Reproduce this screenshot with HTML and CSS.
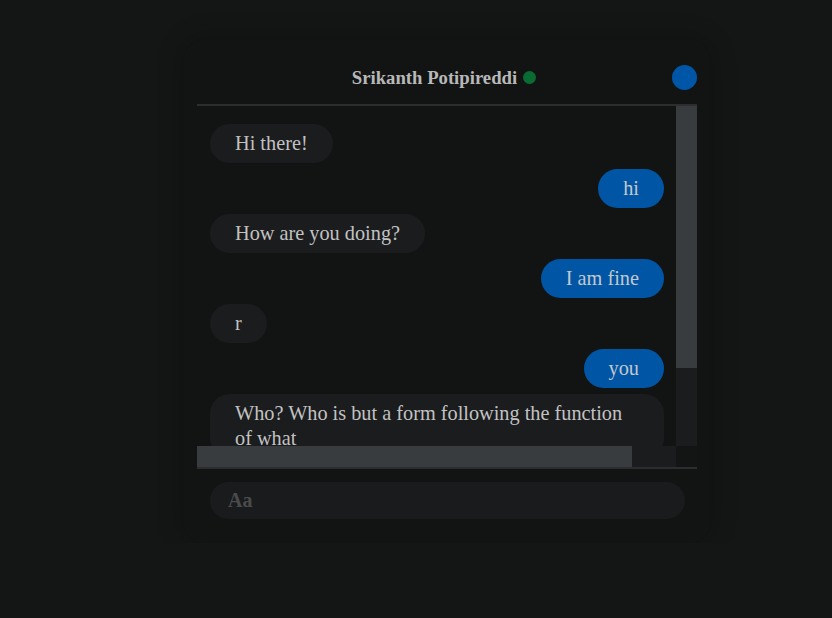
FILE: index.html
```html
<!DOCTYPE html>
<html lang="en">
<head>
<meta charset="utf-8">
<title>Chat</title>
<link rel="stylesheet" href="styles.css">
</head>
<body>
<div class="chat">
  <header class="chat-header">
    <div class="header-side"></div>
    <div class="title">
      <span class="name">Srikanth Potipireddi</span>
      <span class="status"></span>
    </div>
    <div class="header-side header-actions">
      <span class="avatar"></span>
    </div>
  </header>
  <div class="messages">
    <div class="viewport">
      <div class="list">
        <div class="msg in">Hi there!</div>
        <div class="msg out">hi</div>
        <div class="msg in">How are you doing?</div>
        <div class="msg out">I am fine</div>
        <div class="msg in">r</div>
        <div class="msg out">you</div>
        <div class="msg in">Who? Who is but a form following the function of what</div>
      </div>
    </div>
    <div class="vbar"><div class="vthumb"></div></div>
    <div class="hbar"><div class="hthumb"></div></div>
    <div class="corner"></div>
  </div>
  <footer class="composer">
    <input class="input" type="text" placeholder="Aa">
  </footer>
</div>
</body>
</html>
```

FILE: styles.css
```css
html, body {
  margin: 0;
  background: #141616;
}

body {
  padding: 40px 0 0 184px;
  font-family: "Liberation Serif", serif;
}

.chat {
  width: 526px;
  height: 503px;
  box-sizing: border-box;
  padding: 0 13px;
  background: #121414;
  border-radius: 20px;
  box-shadow: 0 0 26px rgba(0, 0, 0, 0.28);
  display: flex;
  flex-direction: column;
}

.chat-header {
  flex: none;
  height: 66px;
  box-sizing: border-box;
  padding-top: 11px;
  border-bottom: 2px solid #2b2d2f;
  display: grid;
  grid-template-columns: 1fr auto 1fr;
  align-items: center;
}

.title {
  display: flex;
  align-items: center;
}

.name {
  font-weight: 700;
  font-size: 18.7px;
  color: #b8b8b8;
}

.status {
  width: 13px;
  height: 13px;
  border-radius: 50%;
  background: #0a6b33;
  margin: 0 6px;
}

.header-actions {
  display: flex;
  justify-content: flex-end;
}

.avatar {
  width: 25px;
  height: 25px;
  border-radius: 50%;
  background: #0056a6;
}

.messages {
  flex: none;
  height: 361px;
  display: grid;
  grid-template-columns: 1fr 21px;
  grid-template-rows: 340px 21px;
}

.viewport {
  overflow: hidden;
  min-width: 0;
}

.vbar,
.hbar {
  background: #1b1c1e;
}

.vthumb {
  height: 262px;
  background: #393c3f;
}

.hthumb {
  width: 435px;
  height: 100%;
  background: #393c3f;
}

.corner {
  background: #131515;
}

.list {
  display: flex;
  flex-direction: column;
  gap: 6px;
  padding: 18px 12px 0 13px;
}

.msg {
  box-sizing: border-box;
  max-width: 100%;
  padding: 7px 25px;
  border-radius: 20px;
  font-size: 20.3px;
  line-height: 25px;
  color: #c2c2c2;
}

.in {
  align-self: flex-start;
  background: #1b1c1e;
}

.out {
  align-self: flex-end;
  background: #0055a5;
  color: #c3c8cc;
}

.composer {
  flex: none;
  border-top: 2px solid #2b2d2f;
  padding: 13px 12px 24px 13px;
}

.input {
  display: block;
  width: 100%;
  height: 37px;
  box-sizing: border-box;
  border: none;
  outline: none;
  border-radius: 18.5px;
  background: #1a1b1d;
  padding: 0 18px;
  font-family: "Liberation Serif", serif;
  font-weight: 700;
  font-size: 20px;
  color: #c2c2c2;
}

.input::placeholder {
  color: #4a4b4c;
}
```
